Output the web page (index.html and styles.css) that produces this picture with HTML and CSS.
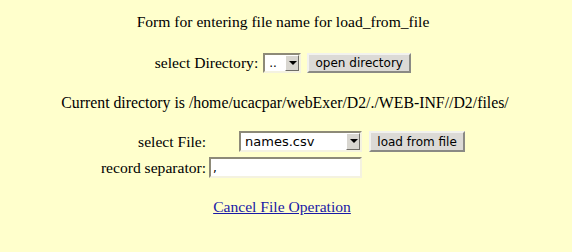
FILE: index.html
```html
<!DOCTYPE html>
<html lang="en">
<head>
    <meta charset="UTF-8">
    <title>load_from_file</title>
    <link rel="stylesheet" href="styles.css">
</head>
<body>
    <h1 class="title">Form for entering file name for load_from_file</h1>

    <form class="dir-row">
        <label>select Directory:</label>
        <span class="dropdown dir-select">
            <span class="dropdown-value">..</span>
            <span class="dropdown-arrow"></span>
        </span>
        <button type="button" class="btn dir-btn">open directory</button>
    </form>

    <p class="current">Current directory is /home/ucacpar/webExer/D2/./WEB-INF//D2/files/</p>

    <form class="file-form">
        <label class="lbl">select File:</label>
        <span class="dropdown file-select">
            <span class="dropdown-value">names.csv</span>
            <span class="dropdown-arrow"></span>
        </span>
        <button type="button" class="btn file-btn">load from file</button>

        <label class="lbl">record separator:</label>
        <input class="sep-input" type="text" value=",">
    </form>

    <p class="cancel"><a href="#">Cancel File Operation</a></p>
</body>
</html>
```

FILE: styles.css
```css
body {
    background-color: #ffffcc;
    color: #000000;
    font-family: "Liberation Serif", "Times New Roman", serif;
    font-size: 15.6px;
    margin: 0;
    padding: 0;
}
.title {
    font-size: 15.6px;
    font-weight: normal;
    text-align: center;
    margin: 13px 0 0;
    padding-right: 6px;
}
.dir-row {
    display: flex;
    justify-content: center;
    align-items: center;
    margin-top: 22px;
    padding-right: 6px;
}
.dir-row label {
    margin-right: 5px;
}
.dropdown {
    position: relative;
    display: inline-block;
    box-sizing: border-box;
    height: 20px;
    background: #ffffff;
    border-top: 2px solid #8d8a78;
    border-left: 2px solid #8d8a78;
    border-bottom: 2px solid #f4f2e0;
    border-right: 2px solid #f4f2e0;
    font-family: "DejaVu Sans", sans-serif;
    font-size: 12px;
}
.dropdown-value {
    display: block;
    padding: 0 0 0 4px;
    line-height: 16px;
}
.dropdown-arrow {
    position: absolute;
    top: 0;
    right: 0;
    width: 14px;
    height: 16px;
    box-sizing: border-box;
    background: #d8d6d0;
    border-top: 1px solid #ffffff;
    border-left: 1px solid #ffffff;
    border-bottom: 1px solid #6e6c66;
    border-right: 1px solid #6e6c66;
}
.dropdown-arrow::after {
    content: "";
    position: absolute;
    left: 3px;
    top: 5px;
    border-left: 4px solid transparent;
    border-right: 4px solid transparent;
    border-top: 4px solid #000000;
}
.dir-select {
    width: 38px;
}
.btn {
    box-sizing: border-box;
    height: 20px;
    padding: 0;
    background: #dcdad6;
    border-top: 2px solid #f2f2ee;
    border-left: 2px solid #f2f2ee;
    border-bottom: 2px solid #8a8a84;
    border-right: 2px solid #8a8a84;
    font-family: "DejaVu Sans", sans-serif;
    font-size: 12px;
    color: #000000;
}
.dir-btn {
    width: 104px;
    margin-left: 6px;
}
.current {
    text-align: center;
    margin: 21px 0 0;
    padding-right: 2px;
    font-size: 15.8px;
}
.file-form {
    display: grid;
    grid-template-columns: auto 153px 96px;
    grid-template-rows: 21px 21px;
    column-gap: 3px;
    row-gap: 5px;
    justify-content: center;
    align-items: center;
    margin-top: 19px;
    padding-right: 10px;
}
.lbl {
    justify-self: end;
    white-space: nowrap;
}
.file-select {
    justify-self: end;
    width: 123px;
    height: 21px;
}
.file-select .dropdown-arrow {
    height: 17px;
    top: 0;
}
.file-select .dropdown-value {
    line-height: 17px;
    font-size: 13px;
}
.file-btn {
    width: 96px;
    height: 21px;
    margin-left: 4px;
}
.sep-input {
    box-sizing: border-box;
    width: 153px;
    height: 21px;
    margin: 0;
    padding: 0 2px;
    background: #ffffff;
    border-top: 2px solid #8d8a78;
    border-left: 2px solid #8d8a78;
    border-bottom: 2px solid #f4f2e0;
    border-right: 2px solid #f4f2e0;
    font-family: "DejaVu Sans", sans-serif;
    font-size: 12px;
}
.cancel {
    text-align: center;
    margin: 20px 0 0;
    padding-right: 8px;
}
.cancel a {
    color: #1a1aa6;
}
```
